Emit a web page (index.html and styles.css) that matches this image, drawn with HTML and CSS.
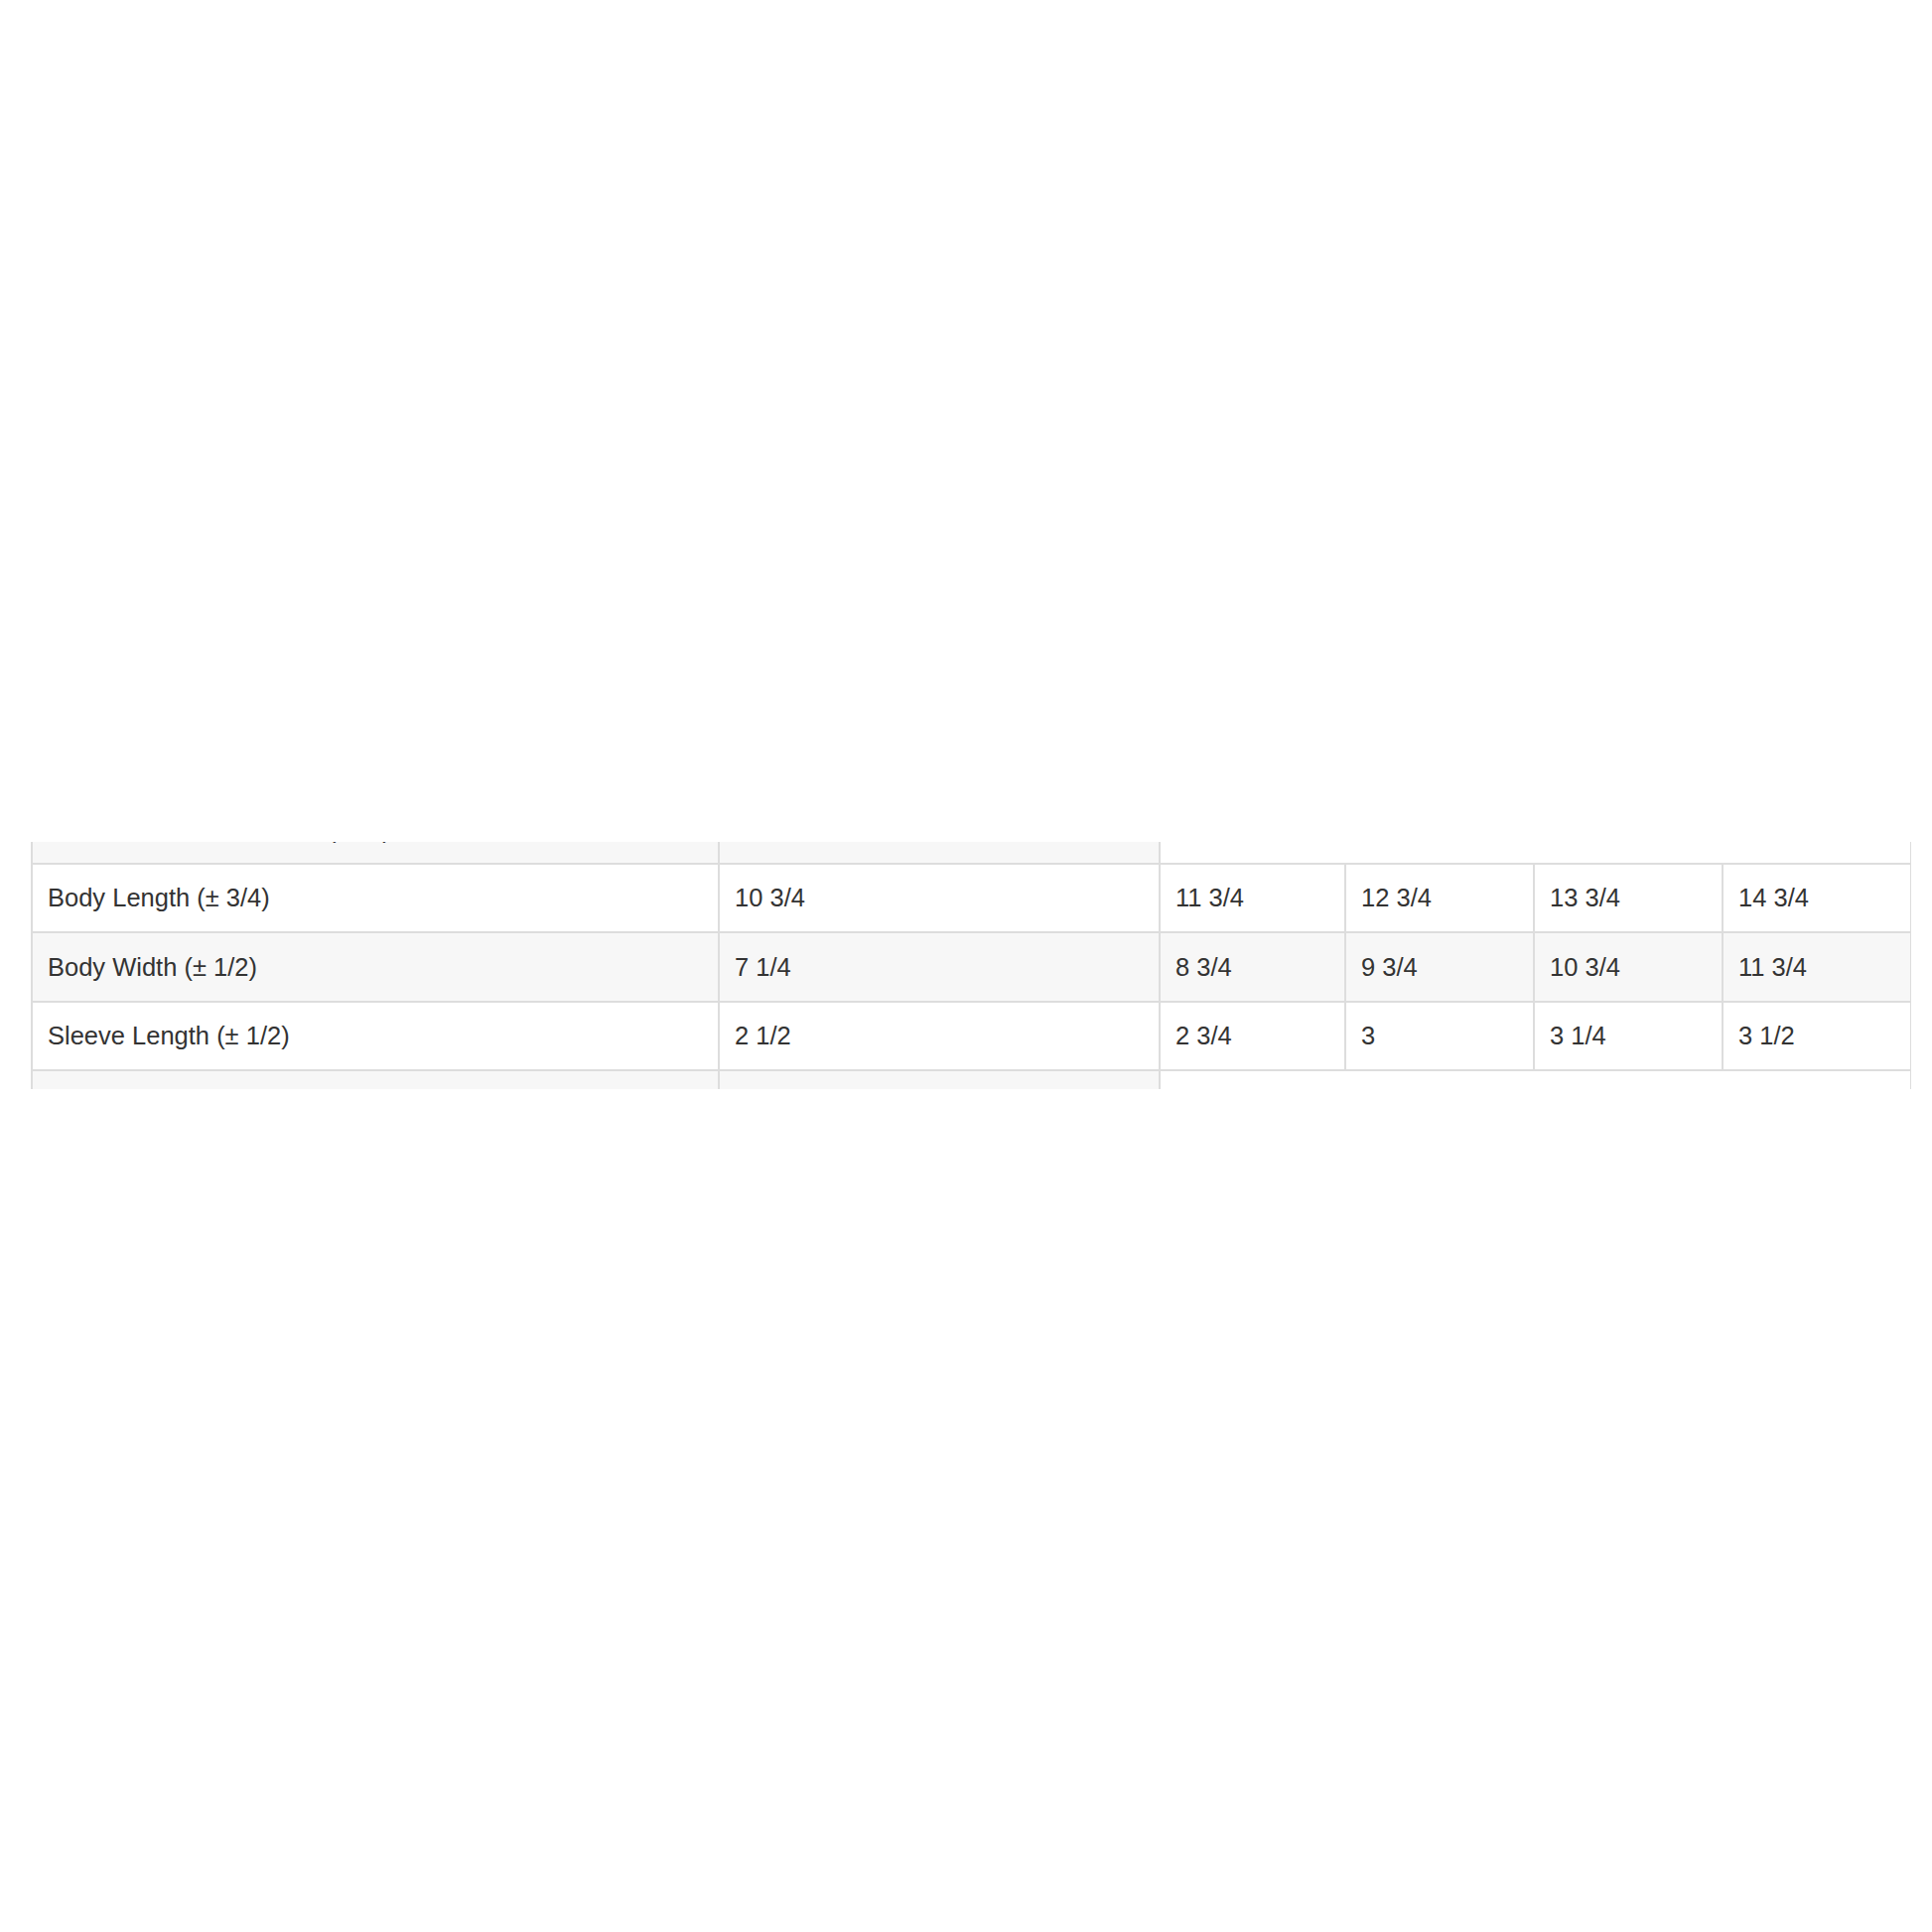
FILE: index.html
```html
<!DOCTYPE html>
<html lang="en">
<head>
<meta charset="utf-8">
<title>Size chart</title>
<link rel="stylesheet" href="styles.css">
</head>
<body>
<div class="page">
  <div class="clip">
    <table class="sizes">
      <colgroup>
        <col class="c-label">
        <col class="c-first">
        <col class="c-size-a">
        <col class="c-size">
        <col class="c-size">
        <col class="c-size">
      </colgroup>
      <tbody>
        <tr class="shade">
          <td>Garment Measurements (inch)</td>
          <td></td>
          <td class="void"></td>
          <td class="void"></td>
          <td class="void"></td>
          <td class="void"></td>
        </tr>
        <tr>
          <td>Body Length (± 3/4)</td>
          <td>10 3/4</td>
          <td>11 3/4</td>
          <td>12 3/4</td>
          <td>13 3/4</td>
          <td>14 3/4</td>
        </tr>
        <tr class="shade">
          <td>Body Width (± 1/2)</td>
          <td>7 1/4</td>
          <td>8 3/4</td>
          <td>9 3/4</td>
          <td>10 3/4</td>
          <td>11 3/4</td>
        </tr>
        <tr>
          <td>Sleeve Length (± 1/2)</td>
          <td>2 1/2</td>
          <td>2 3/4</td>
          <td>3</td>
          <td>3 1/4</td>
          <td>3 1/2</td>
        </tr>
        <tr class="shade">
          <td></td>
          <td></td>
          <td class="void"></td>
          <td class="void"></td>
          <td class="void"></td>
          <td class="void"></td>
        </tr>
      </tbody>
    </table>
  </div>
</div>
</body>
</html>
```

FILE: styles.css
```css
html, body {
  margin: 0;
  padding: 0;
  background: #ffffff;
}

.page {
  width: 1946px;
  height: 1946px;
  padding-top: 848px;
  padding-left: 31px;
  box-sizing: border-box;
}

.clip {
  width: 1894px;
  height: 249px;
  overflow: hidden;
}

.sizes {
  margin-top: -49px;
  width: 1893px;
  border-collapse: collapse;
  table-layout: fixed;
  border: 2px solid #dddddd;
  font-family: "Liberation Sans", Arial, Helvetica, sans-serif;
  font-size: 25.5px;
  color: #333333;
}

.c-label { width: 692px; }
.c-first { width: 444px; }
.c-size-a { width: 187px; }
.c-size { width: 190px; }

.sizes td {
  height: 69.5px;
  padding: 0 15px;
  border: 2px solid #dddddd;
  vertical-align: middle;
  line-height: 30px;
  white-space: nowrap;
  box-sizing: border-box;
}

.sizes tr.shade td {
  background: #f7f7f7;
}

.sizes tr.shade td.void,
.sizes td.void {
  background: transparent;
  border-left: none;
  border-right: none;
}
```
